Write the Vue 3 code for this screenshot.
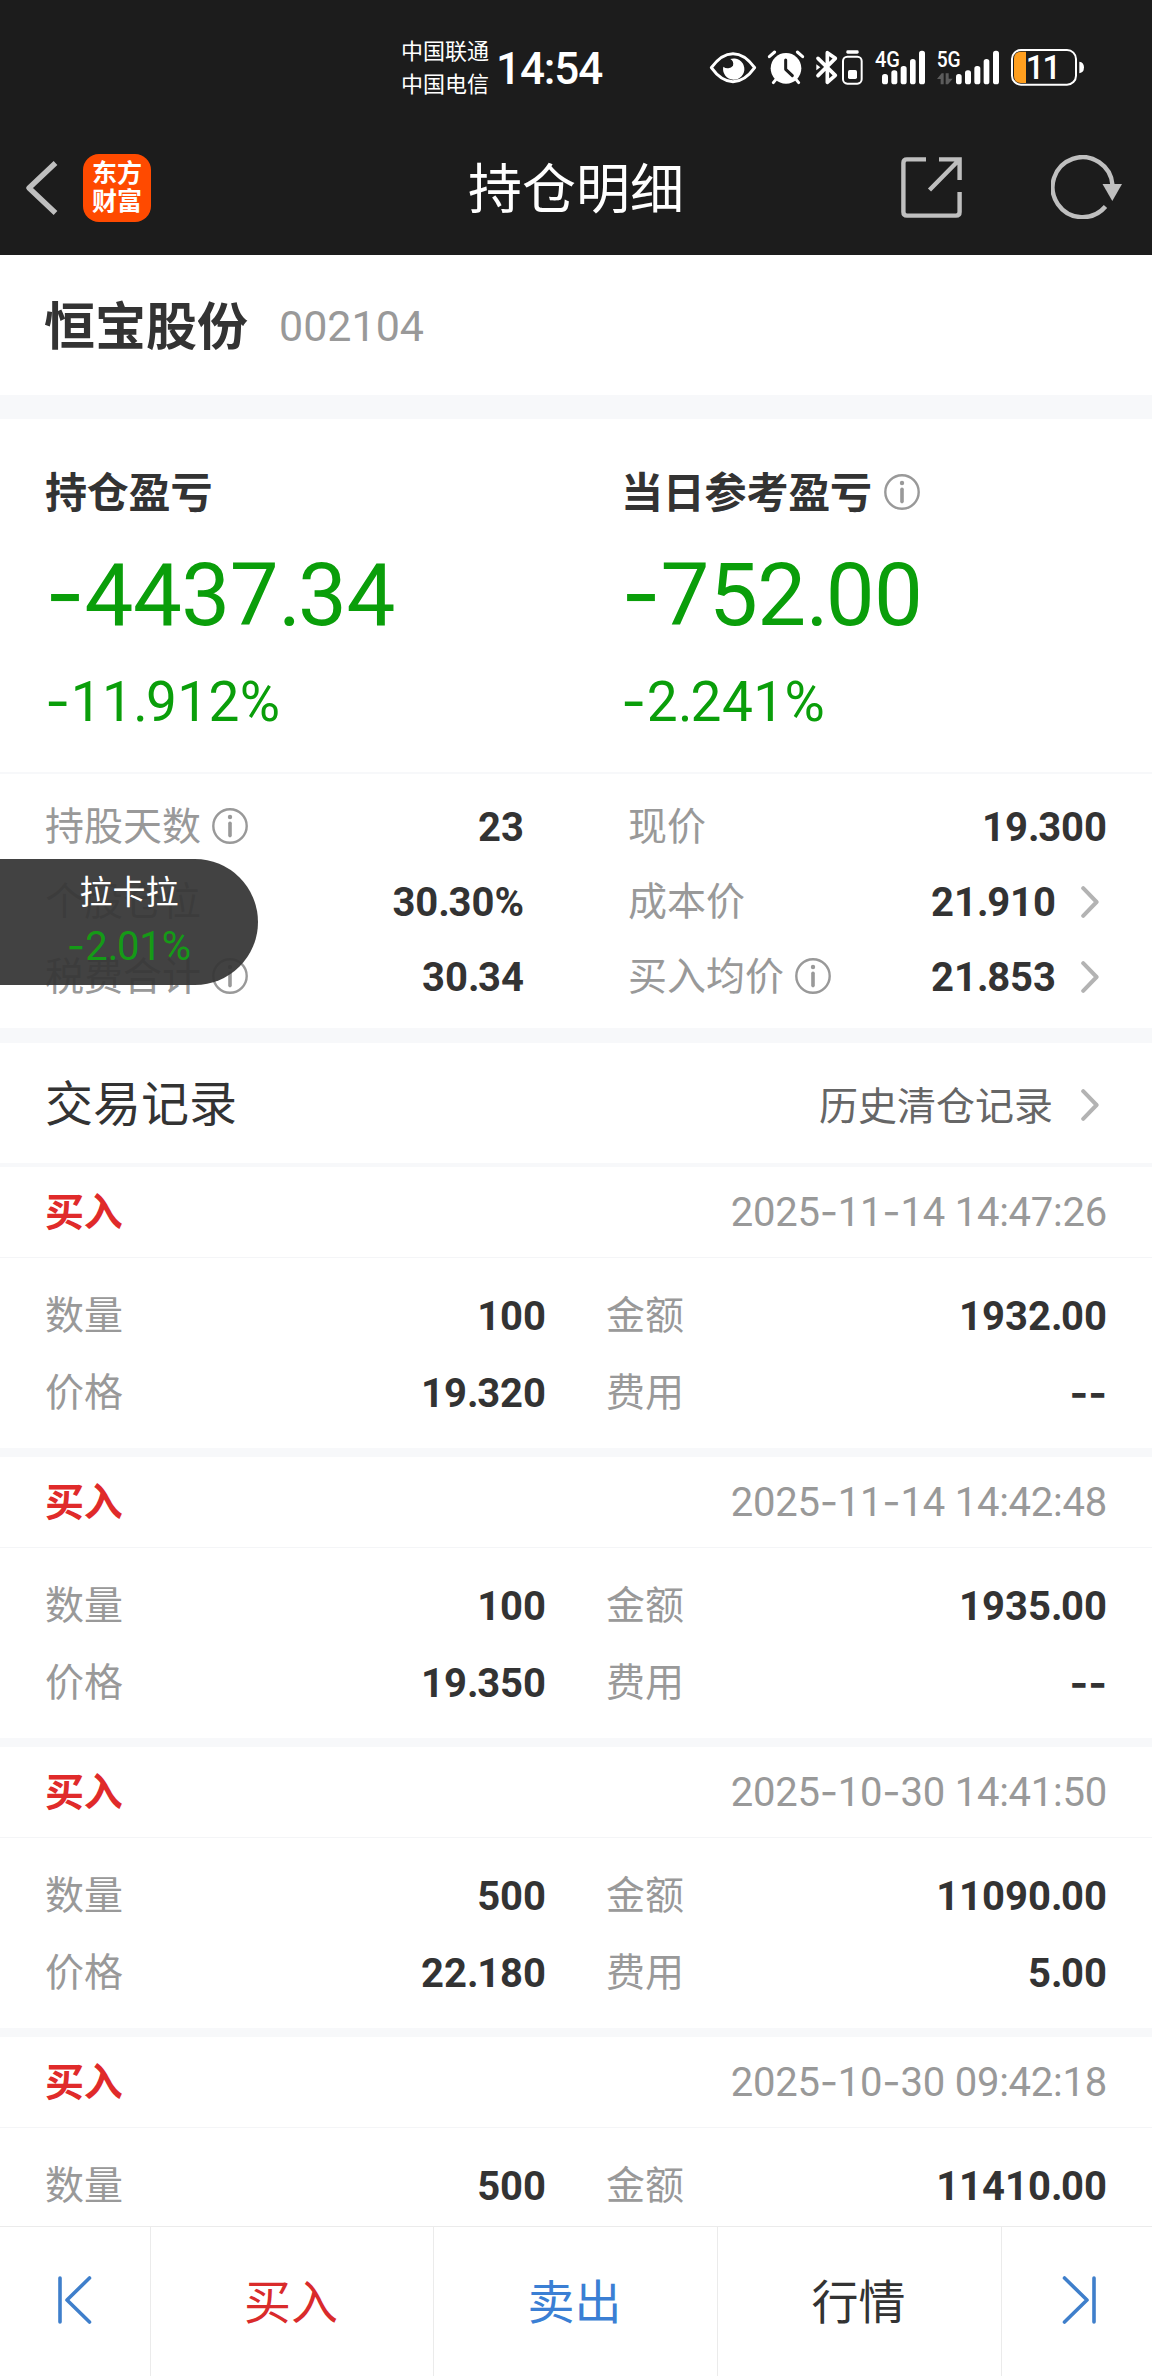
<script setup>
import { h } from 'vue'

// Figures are set with a wide dash and a tight decimal point.
const Num = (props) =>
  h(
    'span',
    { class: 'num' },
    props.v.split(/([-.%])/).filter(Boolean).map((part) =>
      part === '-' ? h('span', { class: 'dash' }, '-')
        : part === '.' ? h('span', { class: 'dot' }, '.')
          : part
    )
  )
Num.props = ['v']

const InfoIcon = () =>
  h('svg', { class: 'info', viewBox: '0 0 36 36', fill: 'none' }, [
    h('circle', { cx: 18, cy: 18, r: 16.7, stroke: '#999', 'stroke-width': 2.4 }),
    h('circle', { cx: 18, cy: 9, r: 2.2, fill: '#999' }),
    h('path', { d: 'M18 15.2v12.4', stroke: '#999', 'stroke-width': 3.6, 'stroke-linecap': 'round' })
  ])

const Chevron = () =>
  h('svg', { class: 'chevron', viewBox: '0 0 18 32', fill: 'none' }, [
    h('path', { d: 'M2.2 2.2L15.6 16L2.2 29.8', stroke: '#b3b3b3', 'stroke-width': 4, 'stroke-linecap': 'round', 'stroke-linejoin': 'round' })
  ])

const profits = [
  { label: '持仓盈亏', value: '-4437.34', percent: '-11.912%' },
  { label: '当日参考盈亏', info: true, value: '-752.00', percent: '-2.241%' }
]

const leftStats = [
  { label: '持股天数', info: true, value: '23' },
  { label: '个股仓位', value: '30.30%' },
  { label: '税费合计', info: true, value: '30.34' }
]
const rightStats = [
  { label: '现价', value: '19.300' },
  { label: '成本价', value: '21.910', link: true },
  { label: '买入均价', info: true, value: '21.853', link: true }
]

const records = [
  { time: '2025-11-14 14:47:26', cells: [['数量', '100'], ['金额', '1932.00'], ['价格', '19.320'], ['费用', '--']] },
  { time: '2025-11-14 14:42:48', cells: [['数量', '100'], ['金额', '1935.00'], ['价格', '19.350'], ['费用', '--']] },
  { time: '2025-10-30 14:41:50', cells: [['数量', '500'], ['金额', '11090.00'], ['价格', '22.180'], ['费用', '5.00']] },
  { time: '2025-10-30 09:42:18', cells: [['数量', '500'], ['金额', '11410.00']] }
]
</script>

<template>
  <div class="screen">
    <header class="top">
      <div class="status">
        <div class="carriers"><span>中国联通</span><span>中国电信</span></div>
        <div class="clock">14:54</div>
        <svg class="status-icons" viewBox="0 0 1260 240" fill="none">
          <path d="M64 113Q94 71 129 71Q164 71 194 113Q164 155 129 155Q94 155 64 113Z" stroke="#fff" stroke-width="9" stroke-linejoin="round" />
          <path d="M121 87A32 32 0 1 1 100 110A20 20 0 0 0 129 107A18 18 0 0 0 121 87Z" fill="#fff" />
          <circle cx="288" cy="115" r="46" fill="#fff" />
          <path d="M238 80L254 66M338 80L322 66M250 158L258 148M326 158L318 148" stroke="#fff" stroke-width="9" stroke-linecap="round" />
          <path d="M287 90V118L307 137" stroke="#1c1c1c" stroke-width="9" stroke-linecap="round" stroke-linejoin="round" />
          <path d="M384 85L436 136L412 157V68L436 85L384 137" stroke="#fff" stroke-width="11" stroke-linecap="round" stroke-linejoin="round" />
          <path d="M379 103L391 112L379 121Z" fill="#fff" />
          <rect x="459" y="80" width="56" height="81" rx="13" stroke="#fff" stroke-width="6" />
          <rect x="469" y="61" width="37" height="10" rx="4" fill="#fff" />
          <rect x="474" y="120" width="27" height="27" rx="5" fill="#fff" />
          <text x="555" y="111" class="net" textLength="75" lengthAdjust="spacingAndGlyphs">4G</text>
          <g fill="#fff">
            <rect x="576" y="132" width="18" height="31" rx="8" />
            <rect x="604" y="121" width="18" height="42" rx="8" />
            <rect x="632" y="108" width="18" height="55" rx="8" />
            <rect x="660" y="87" width="17" height="76" rx="8" />
            <rect x="687" y="62" width="18" height="101" rx="8" />
            <rect x="798" y="132" width="17" height="31" rx="8" />
            <rect x="825" y="121" width="18" height="42" rx="8" />
            <rect x="853" y="108" width="18" height="55" rx="8" />
            <rect x="881" y="87" width="17" height="76" rx="8" />
            <rect x="909" y="62" width="18" height="101" rx="8" />
          </g>
          <text x="740" y="111" class="net" textLength="72" lengthAdjust="spacingAndGlyphs">5G</text>
          <path d="M741 147L755 130H761V163H752V147ZM767 130H776V146H788L774 163H767Z" fill="#5c5c5c" />
          <path d="M1008 65H992Q972 67 972 87V137Q972 157 992 159H1008Z" fill="#ff9f1f" />
          <rect x="966" y="60" width="192" height="104" rx="27" stroke="#fff" stroke-width="6" />
          <path d="M1168 95Q1182 97 1182 112Q1182 128 1168 130Z" fill="#fff" />
          <text x="1007" y="147" class="level" textLength="106" lengthAdjust="spacing">11</text>
        </svg>
      </div>
      <div class="nav">
        <div class="nav-left">
          <svg class="back" viewBox="0 0 34 56" fill="none"><path d="M30.5 3L4 28L30.5 53" stroke="#bfbfbf" stroke-width="5.4" stroke-linejoin="round" /></svg>
          <div class="logo"><span>东方</span><span>财富</span></div>
        </div>
        <h1>持仓明细</h1>
        <div class="nav-right">
          <svg class="share" viewBox="0 0 61 61" fill="none" stroke="#bfbfbf" stroke-width="4.4">
            <path d="M25 2.4H6Q2.4 2.4 2.4 6V55Q2.4 58.6 6 58.6H55Q58.6 58.6 58.6 55V35" />
            <path d="M38 2.4H58.6V23M58 3L28.5 33" />
          </svg>
          <svg class="refresh" viewBox="0 0 72 64" fill="none">
            <path d="M54.5 51.5A30 30 0 1 1 61.5 30" stroke="#bfbfbf" stroke-width="4.4" />
            <path d="M51.5 29H71L61.3 46Z" fill="#bfbfbf" />
          </svg>
        </div>
      </div>
    </header>

    <main>
      <section class="stock"><h2>恒宝股份</h2><span class="code">002104</span></section>

      <section class="profits">
        <div v-for="p in profits" :key="p.label" class="profit">
          <div class="profit-label"><span>{{ p.label }}</span><InfoIcon v-if="p.info" /></div>
          <div class="profit-value"><Num :v="p.value" /></div>
          <div class="profit-percent"><Num :v="p.percent" /></div>
        </div>
      </section>

      <section class="stats">
        <div v-for="(col, i) in [leftStats, rightStats]" :key="i" class="stat-col">
          <div v-for="s in col" :key="s.label" class="stat">
            <span class="label">{{ s.label }}</span><InfoIcon v-if="s.info" />
            <b><Num :v="s.value" /></b><Chevron v-if="s.link" />
          </div>
        </div>
        <div class="float">
          <span class="float-name">拉卡拉</span>
          <span class="float-pct"><Num v="-2.01%" /></span>
        </div>
      </section>

      <section class="list-head">
        <h3>交易记录</h3>
        <a><span>历史清仓记录</span><Chevron /></a>
      </section>

      <article v-for="r in records" :key="r.time" class="record">
        <div class="record-head"><strong>买入</strong><time><Num :v="r.time" /></time></div>
        <div class="record-body">
          <div v-for="[name, value] in r.cells" :key="name" class="cell">
            <span class="label">{{ name }}</span><b><Num :v="value" /></b>
          </div>
        </div>
      </article>
    </main>

    <footer>
      <div class="tab side">
        <svg viewBox="0 0 34 48" fill="none"><path d="M2 2V46M31.5 2L9 24L31.5 46" /></svg>
      </div>
      <div class="tab buy">买入</div>
      <div class="tab sell">卖出</div>
      <div class="tab">行情</div>
      <div class="tab side last">
        <svg viewBox="0 0 34 48" fill="none"><path d="M32 2V46M2.5 2L25 24L2.5 46" /></svg>
      </div>
    </footer>
  </div>
</template>

<style>
body { background: #fff; }
</style>

<style scoped>
.screen {
  width: 1152px;
  height: 2376px;
  display: flex;
  flex-direction: column;
  overflow: hidden;
  background: #fff;
  color: #333;
  font-family: Roboto, "Noto Sans CJK SC", sans-serif;
  font-size: 39px;
  line-height: 1.2;
}
h1, h2, h3 { margin: 0; font-weight: 400; }
svg { display: block; flex: none; }
:deep(.num) { white-space: pre; }
:deep(.dash) { font-family: Inter, sans-serif; }
:deep(.dot) { letter-spacing: -0.035em; }
:deep(.info) { display: block; flex: none; width: 36px; height: 36px; margin: 0 0 3px 11px; }
:deep(.chevron) { display: block; flex: none; width: 18px; height: 32px; margin: 0 8px 2px 25px; }

.top { flex: none; height: 255px; background: #1c1c1c; color: #fff; }
.status { display: flex; align-items: center; box-sizing: border-box; height: 121px; padding: 15px 0 0 401px; }
.carriers { display: flex; flex-direction: column; width: 88px; font-size: 22px; line-height: 33px; margin-right: 7px; white-space: nowrap; }
.clock { width: 194px; padding-top: 2px; font-size: 44px; font-weight: 500; line-height: 50px; letter-spacing: -1.1px; }
.status-icons { width: 420px; height: 80px; margin-top: 4px; }
.net { font-family: Roboto, sans-serif; font-size: 68px; font-weight: 500; fill: #fff; }
.level { font-family: Roboto, sans-serif; font-size: 98px; font-weight: 500; fill: #fff; }

.nav { display: grid; grid-template-columns: 1fr auto 1fr; align-items: center; height: 134px; }
.nav h1 { padding-top: 5px; font-size: 54px; line-height: 64px; }
.nav-left { display: flex; align-items: center; padding: 0 0 1px 25px; gap: 24px; }
.back { width: 34px; height: 56px; }
.logo { display: flex; flex-direction: column; align-items: center; justify-content: center; width: 68px; height: 68px; border-radius: 16px; background: #ff4a00; font-size: 25px; font-weight: 700; line-height: 28px; }
.nav-right { display: flex; align-items: center; justify-content: flex-end; padding: 0 29px 2px 0; gap: 89px; }
.share { width: 61px; height: 61px; }
.refresh { width: 72px; height: 64px; }

main { flex: 1; min-height: 0; overflow: hidden; }
.stock { display: flex; align-items: center; box-sizing: border-box; height: 164px; padding: 2px 44px 0; border-bottom: 24px solid #f7f8fa; }
.stock h2 { padding-top: 3px; font-size: 51px; font-weight: 700; }
.code { margin-left: 31px; padding-top: 1px; font-size: 43px; color: #999; }

.profits { display: grid; grid-template-columns: 576px 1fr; box-sizing: border-box; height: 355px; padding: 46px 0 0 45px; border-bottom: 2px solid #f7f8fa; }
.profit-label { display: flex; align-items: center; height: 56px; font-size: 42px; font-weight: 700; }
.profit-label span { padding-top: 3px; margin-right: 1px; letter-spacing: -0.2px; }
.profit-value { height: 147px; font-size: 87px; line-height: 146px; letter-spacing: -0.5px; color: #0a9e0a; }
.profit-percent { height: 68px; font-size: 55px; line-height: 67px; letter-spacing: 0.4px; color: #0a9e0a; }

.stats { position: relative; display: grid; grid-template-columns: 479px 479px; column-gap: 104px; box-sizing: border-box; height: 269px; padding: 16px 0 0 45px; border-bottom: 15px solid #f7f8fa; }
.stat { display: flex; align-items: center; height: 75px; }
.label { color: #999; }
b { margin-left: auto; font-size: 40px; font-weight: 700; }
.float { position: absolute; left: 0; top: 85px; display: flex; flex-direction: column; align-items: center; box-sizing: border-box; width: 258px; height: 126px; padding: 7px 0 0; border-radius: 0 63px 63px 0; background: rgba(54, 54, 54, 0.94); }
.float-name { height: 54px; font-size: 33px; line-height: 54px; color: #fff; }
.float-pct { height: 52px; font-size: 40px; line-height: 52px; color: #159a17; }

.list-head { display: flex; align-items: center; justify-content: space-between; box-sizing: border-box; height: 124px; padding: 0 45px; border-bottom: 4px solid #f7f8fa; }
.list-head h3 { padding-top: 3px; font-size: 48px; }
.list-head a { display: flex; align-items: center; padding-top: 6px; color: #666; }
.list-head a span { padding-top: 2px; margin-right: 3px; }

.record { border-bottom: 9px solid #f7f8fa; }
.record-head { display: flex; align-items: center; justify-content: space-between; height: 90px; padding: 0 45px; border-bottom: 1px solid #f4f5f7; }
.record-head strong { padding-top: 3px; font-weight: 700; letter-spacing: -0.3px; color: #e02a2a; }
time { padding-top: 1px; font-size: 40px; letter-spacing: -0.24px; color: #999; }
.record-body { display: grid; grid-template-columns: 501px 501px; column-gap: 60px; padding: 20px 44px 16px 45px; }
.cell { display: flex; align-items: center; height: 77px; }

footer { flex: none; display: grid; grid-template-columns: 151px 283px 284px 284px 150px; box-sizing: border-box; height: 150px; border-top: 1px solid #ebebeb; background: #fff; font-size: 47px; }
.tab { display: flex; align-items: center; justify-content: center; box-sizing: border-box; border-right: 1px solid #ebebeb; padding: 4px 2px 0 0; }
.side { padding: 0 0 3px; }
.last { border-right: 0; padding-left: 3px; }
.side svg { width: 34px; height: 48px; stroke: #3f7fcb; stroke-width: 3.6; stroke-linecap: round; stroke-linejoin: round; }
.buy { color: #d92b2b; }
.sell { color: #3b7fd4; }
</style>
